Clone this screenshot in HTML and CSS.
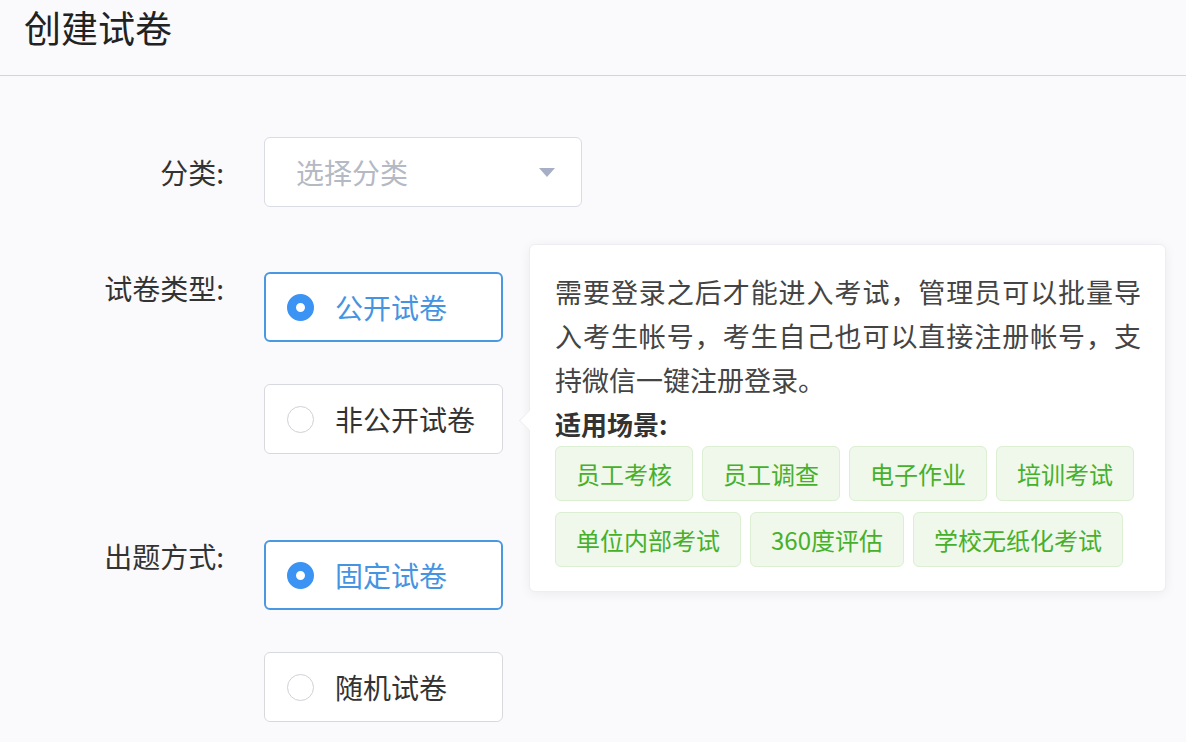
FILE: index.html
```html
<!DOCTYPE html>
<html lang="zh-CN">
<head>
    <meta charset="UTF-8">
    <meta name="viewport" content="width=device-width, initial-scale=1.0">
    <title>创建试卷</title>
    <link rel="stylesheet" href="styles.css">
</head>
<body>
    <div class="page-header">
        <h1 class="page-title">创建试卷</h1>
    </div>

    <div class="form">
        <div class="form-row row-category">
            <label class="form-label label-middle">分类:</label>
            <div class="select">
                <span class="select-placeholder">选择分类</span>
                <span class="select-arrow"></span>
            </div>
        </div>

        <div class="form-row row-type">
            <label class="form-label">试卷类型:</label>
            <div class="radio-group">
                <div class="radio-card is-checked">
                    <span class="radio-dot"></span>
                    <span class="radio-text">公开试卷</span>
                </div>
                <div class="radio-card">
                    <span class="radio-dot"></span>
                    <span class="radio-text">非公开试卷</span>
                </div>
            </div>
        </div>

        <div class="form-row row-mode">
            <label class="form-label">出题方式:</label>
            <div class="radio-group">
                <div class="radio-card is-checked">
                    <span class="radio-dot"></span>
                    <span class="radio-text">固定试卷</span>
                </div>
                <div class="radio-card">
                    <span class="radio-dot"></span>
                    <span class="radio-text">随机试卷</span>
                </div>
            </div>
        </div>

        <!-- Popover for the type option -->
        <div class="popover">
            <span class="popover-arrow"></span>
            <p class="popover-text">需要登录之后才能进入考试，管理员可以批量导入考生帐号，考生自己也可以直接注册帐号，支持微信一键注册登录。</p>
            <div class="popover-subtitle">适用场景:</div>
            <div class="tags">
                <span class="tag">员工考核</span>
                <span class="tag">员工调查</span>
                <span class="tag">电子作业</span>
                <span class="tag">培训考试</span>
                <span class="tag">单位内部考试</span>
                <span class="tag">360度评估</span>
                <span class="tag">学校无纸化考试</span>
            </div>
        </div>
    </div>
</body>
</html>
```

FILE: styles.css
```css
body {
    margin: 0;
    padding: 0;
    background-color: #fafafc;
    font-family: "Noto Sans CJK SC", "Noto Sans", sans-serif;
    color: #333;
    overflow: hidden;
}

.page-header {
    height: 75px;
    border-bottom: 1px solid #d4d4d8;
    padding-left: 24px;
    display: flex;
    align-items: center;
}

.page-title {
    margin: 0;
    font-size: 37px;
    font-weight: 400;
    color: #222;
    line-height: 1;
    margin-top: -20px;
}

.form {
    position: relative;
    padding-top: 61px;
}

.form-row {
    display: grid;
    grid-template-columns: 224px 1fr;
    column-gap: 40px;
    align-items: start;
}

.row-type {
    margin-top: 65px;
}

.row-mode {
    margin-top: 86px;
}

.form-label {
    text-align: right;
    font-size: 28px;
    line-height: 32px;
    color: #333;
}

.label-middle {
    line-height: 70px;
}

/* Select */
.select {
    box-sizing: border-box;
    width: 318px;
    height: 70px;
    border: 1px solid #d9dce3;
    border-radius: 6px;
    background-color: #fff;
    display: flex;
    align-items: center;
    justify-content: space-between;
    padding: 0 26px 0 31px;
}

.select-placeholder {
    font-size: 28px;
    color: #b4b9c4;
}

.select-arrow {
    width: 0;
    height: 0;
    border-left: 8px solid transparent;
    border-right: 8px solid transparent;
    border-top: 9px solid #a7afc6;
}

/* Radio cards */
.radio-group {
    display: flex;
    flex-direction: column;
    gap: 42px;
}

.radio-card {
    box-sizing: border-box;
    width: 239px;
    height: 70px;
    border: 1px solid #d7d9de;
    border-radius: 6px;
    background-color: #fff;
    display: flex;
    align-items: center;
    padding-left: 22px;
}

.radio-dot {
    box-sizing: border-box;
    width: 27px;
    height: 27px;
    border-radius: 50%;
    border: 1px solid #cfd1d6;
    background-color: #fff;
    margin-right: 21px;
    flex-shrink: 0;
}

.radio-text {
    font-size: 28px;
    color: #333;
}

.radio-card.is-checked {
    border: 2px solid #4a98e2;
    padding-left: 21px;
}

.radio-card.is-checked .radio-dot {
    border: 9px solid #3b93f3;
}

.radio-card.is-checked .radio-text {
    color: #4594e2;
}

/* Popover */
.popover {
    position: absolute;
    left: 529px;
    top: 168px;
    box-sizing: border-box;
    width: 637px;
    padding: 25px 20px 24px 25px;
    background-color: #fff;
    border: 1px solid #eceef3;
    border-radius: 6px;
    box-shadow: 0 2px 12px rgba(0, 0, 0, 0.06);
}

.popover-arrow {
    position: absolute;
    left: -8px;
    top: 168px;
    width: 14px;
    height: 14px;
    background-color: #fff;
    border-left: 1px solid #eceef3;
    border-bottom: 1px solid #eceef3;
    transform: rotate(45deg);
}

.popover-text {
    margin: 0;
    margin-right: 4px;
    font-size: 27px;
    line-height: 44px;
    text-align: justify;
    color: #444;
}

.popover-subtitle {
    font-size: 26px;
    line-height: 44px;
    font-weight: 700;
    color: #333;
}

.tags {
    display: flex;
    flex-wrap: wrap;
    column-gap: 9px;
    row-gap: 11px;
}

.tag {
    box-sizing: border-box;
    height: 55px;
    line-height: 53px;
    padding: 0 20px;
    font-size: 24px;
    color: #47b02b;
    background-color: #eff8ea;
    border: 1px solid #dcefd3;
    border-radius: 6px;
}
```
